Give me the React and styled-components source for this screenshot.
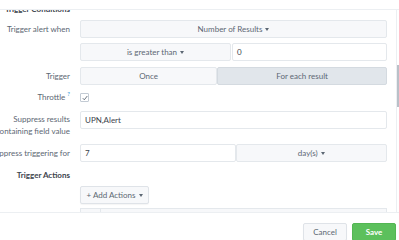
import React from "react";
import styled, { createGlobalStyle } from "styled-components";

const GlobalStyle = createGlobalStyle`
  html, body {
    margin: 0;
    padding: 0;
    background: #fff;
  }
  body {
    font-family: Lato, "Open Sans", sans-serif;
    font-size: 8px;
    color: #3c444d;
  }
`;

const Page = styled.div`
  width: 399px;
  height: 240px;
  display: flex;
  flex-direction: column;
  overflow: hidden;
  background: #fff;
`;
const TopBar = styled.div`
  height: 9px;
  flex-shrink: 0;
  border-bottom: 1px solid #eceff2;
`;
const Middle = styled.div`
  display: flex;
  height: 202px;
  flex-shrink: 0;
`;
const Viewport = styled.div`
  width: 396px;
  border-right: 1px solid #eceff2;
  overflow: hidden;
`;
const Content = styled.div`
  margin-top: -6px;
  display: flex;
  flex-direction: column;
`;
const Track = styled.div`
  width: 2px;
`;
const Thumb = styled.div`
  margin-top: 55px;
  height: 42px;
  background: #b9c0c8;
`;

const Row = styled.div`
  display: flex;
  align-items: flex-start;
  gap: 10px;
  margin-top: ${(p) => p.$mt || 0}px;
`;
const Label = styled.div`
  width: 70px;
  flex-shrink: 0;
  display: flex;
  flex-direction: column;
  align-items: flex-end;
  text-align: right;
  white-space: nowrap;
  color: #5c6773;
  line-height: ${(p) => p.$lh || 18}px;
  padding-top: ${(p) => p.$pt || 0}px;
`;
const Heading = styled(Label)`
  font-weight: 700;
  color: #3c444d;
  line-height: 10px;
`;
const Help = styled.sup`
  color: #1a8fd6;
  font-size: 6px;
  margin-left: 2px;
  line-height: 0;
`;
const Control = styled.div`
  width: 307px;
  display: flex;
  gap: ${(p) => p.$gap || 0}px;
`;
const Select = styled.div`
  flex: ${(p) => p.$grow || 1};
  height: 18px;
  box-sizing: border-box;
  display: flex;
  align-items: center;
  justify-content: center;
  gap: 3px;
  background: ${(p) => (p.$active ? "#e1e6eb" : "#f7f8fa")};
  border: 1px solid ${(p) => (p.$active ? "#d4dae0" : "#e4e8ec")};
  border-radius: 2px;
  color: #5c6773;
`;
const Input = styled.div`
  flex: 1;
  height: 18px;
  box-sizing: border-box;
  display: flex;
  align-items: center;
  padding-left: 4px;
  background: #fff;
  border: 1px solid #e4e8ec;
  border-radius: 2px;
  color: #3c444d;
`;
const Caret = styled.span`
  width: 0;
  height: 0;
  border-left: 2.5px solid transparent;
  border-right: 2.5px solid transparent;
  border-top: 3px solid #5c6773;
`;
const Checkbox = styled.div`
  width: 9px;
  height: 9px;
  margin-top: 1px;
  box-sizing: border-box;
  border: 1px solid #c3cbd4;
  border-radius: 1px;
  display: flex;
  align-items: center;
  justify-content: center;
`;
const Button = styled.div`
  width: ${(p) => p.$w}px;
  height: 18px;
  box-sizing: border-box;
  display: flex;
  align-items: center;
  justify-content: center;
  gap: 3px;
  border-radius: 2px;
  background: ${(p) => (p.$primary ? "#5cc05c" : "#f7f8fa")};
  border: 1px solid ${(p) => (p.$primary ? "#53b653" : "#dfe3e8")};
  color: ${(p) => (p.$primary ? "#fff" : "#5c6773")};
  font-weight: ${(p) => (p.$primary ? 700 : 400)};
  box-shadow: 0 1px 1px rgba(0, 0, 0, 0.04);
`;
const ActionTable = styled.div`
  width: 307px;
  height: 18px;
  box-sizing: border-box;
  display: flex;
  border: 1px solid #e4e8ec;
  background: #f7f8fa;
`;
const ActionCell = styled.div`
  width: ${(p) => p.$w}px;
  flex: ${(p) => (p.$w ? "none" : 1)};
  border-right: ${(p) => (p.$w ? "1px solid #e4e8ec" : "none")};
`;
const Footer = styled.div`
  height: 27px;
  flex-shrink: 0;
  border-top: 1px solid #eceff2;
  display: flex;
  justify-content: flex-end;
  align-items: flex-start;
  gap: 5px;
  padding: 10px 3px 0 0;
`;

export default function App() {
  return (
    <Page>
      <GlobalStyle />
      <TopBar />
      <Middle>
        <Viewport>
          <Content>
            <Row>
              <Heading>Trigger Conditions</Heading>
            </Row>
            <Row $mt={6}>
              <Label>Trigger alert when</Label>
              <Control>
                <Select>
                  Number of Results <Caret />
                </Select>
              </Control>
            </Row>
            <Row $mt={5}>
              <Label />
              <Control $gap={1}>
                <Select>
                  is greater than <Caret />
                </Select>
                <Input>0</Input>
              </Control>
            </Row>
            <Row $mt={6}>
              <Label>Trigger</Label>
              <Control>
                <Select $grow={137}>Once</Select>
                <Select $grow={170} $active>
                  For each result
                </Select>
              </Control>
            </Row>
            <Row $mt={7}>
              <Label $lh={10}>
                <span>
                  Throttle<Help>?</Help>
                </span>
              </Label>
              <Checkbox>
                <svg width="6" height="6" viewBox="0 0 6 6">
                  <polyline
                    points="0.8,3.2 2.3,4.8 5.3,1"
                    fill="none"
                    stroke="#5c6773"
                    strokeWidth="0.9"
                  />
                </svg>
              </Checkbox>
            </Row>
            <Row $mt={9}>
              <Label $lh={12} $pt={2}>
                <span>Suppress results</span>
                <span>containing field value</span>
              </Label>
              <Control>
                <Input>UPN,Alert</Input>
              </Control>
            </Row>
            <Row $mt={7}>
              <Label>
                <span>Suppress triggering for</span>
              </Label>
              <Control>
                <Input>7</Input>
                <Select>
                  day(s) <Caret />
                </Select>
              </Control>
            </Row>
            <Row $mt={8}>
              <Heading>Trigger Actions</Heading>
            </Row>
            <Row $mt={6}>
              <Label />
              <Button $w={69}>
                + Add Actions <Caret />
              </Button>
            </Row>
            <Row $mt={4}>
              <Label />
              <ActionTable>
                <ActionCell $w={19} />
                <ActionCell />
              </ActionTable>
            </Row>
          </Content>
        </Viewport>
        <Track>
          <Thumb />
        </Track>
      </Middle>
      <Footer>
        <Button $w={44}>Cancel</Button>
        <Button $w={44} $primary>
          Save
        </Button>
      </Footer>
    </Page>
  );
}
